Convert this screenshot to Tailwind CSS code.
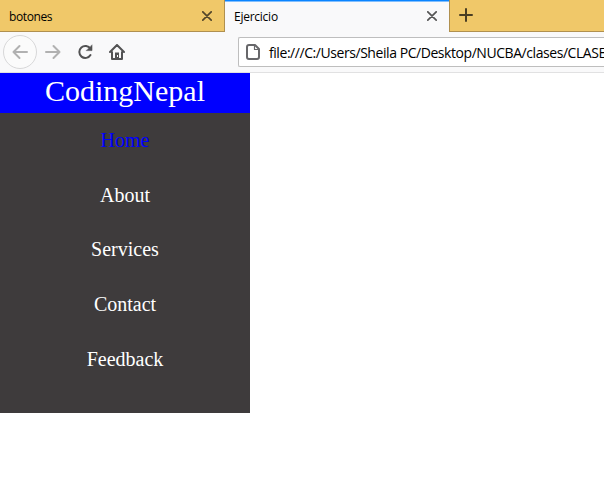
<!DOCTYPE html>
<html lang="es">
<head>
<meta charset="utf-8">
<title>Ejercicio</title>
<script src="https://cdn.jsdelivr.net/npm/@tailwindcss/browser@4"></script>
</head>
<body class="h-[491px] w-[604px] overflow-hidden bg-white font-['Open_Sans',sans-serif] text-black">
<header class="bg-[#f9f9fa]">
  <div class="flex h-8">
    <div class="flex h-8 w-[225px] items-center justify-between border-r border-b border-[#b0904f] bg-[#f0c869] pr-3 pl-[9px]">
      <span class="pt-[3px] text-[12px] leading-4 tracking-[-0.4px]">botones</span>
      <svg class="size-[10px]" viewBox="0 0 10 10" fill="none" stroke="#53462a" stroke-width="1.700" stroke-linecap="round"><path d="M.8 .8l8.400 8.400M9.200 .8L.8 9.200"/></svg>
    </div>
    <div class="flex h-8 w-[224px] items-center justify-between border-t border-[#0a84ff] pr-3 pl-[9px] shadow-[inset_0_0.500px_0_#0a84ff]">
      <span class="pt-px text-[12px] leading-4 tracking-[-0.25px]">Ejercicio</span>
      <svg class="mb-px size-[10px]" viewBox="0 0 10 10" fill="none" stroke="#555555" stroke-width="1.700" stroke-linecap="round"><path d="M.8 .8l8.400 8.400M9.200 .8L.8 9.200"/></svg>
    </div>
    <div class="flex h-8 flex-1 items-center border-b border-l border-[#b0904f] bg-[#f0c869] pl-[9px]">
      <svg class="mb-px size-[14px]" viewBox="0 0 14 14" fill="none" stroke="#4a3e23" stroke-width="2" stroke-linecap="round"><path d="M7 1v12M1 7h12"/></svg>
    </div>
  </div>
  <div class="flex h-[41px] items-center border-b border-[#e1e1e2] pl-[3px]">
    <div class="flex size-[34px] items-center justify-center rounded-full border border-[#d8d8d9] bg-[#fbfbfb]">
      <svg class="size-4" viewBox="0 0 16 16" fill="none" stroke="#b1b1b1" stroke-width="2" stroke-linecap="round" stroke-linejoin="round"><path d="M15 8H1.500M7.500 2L1.500 8l6 6"/></svg>
    </div>
    <svg class="ml-2 size-4" viewBox="0 0 16 16" fill="none" stroke="#b1b1b1" stroke-width="2" stroke-linecap="round" stroke-linejoin="round"><path d="M1 8h13.500M8.500 2l6 6-6 6"/></svg>
    <svg class="ml-4 size-4" viewBox="0 0 16 16" fill="none" stroke="#525253" stroke-width="2" stroke-linecap="round"><path d="M13.400 4.800A6 6 0 1 0 13.500 11"/><path d="M15 1.200v5.400H9.600z" fill="#525253" stroke="#525253" stroke-width=".6" stroke-linejoin="round"/></svg>
    <svg class="ml-4 size-4" viewBox="0 0 16 16" fill="none" stroke="#525253" stroke-width="2" stroke-linecap="round" stroke-linejoin="round"><path d="M1 8l7-7 7 7M3 8v7h10V8"/><path d="M6 15V8.500h4V15z" fill="#525253" stroke="none"/><path d="M8.500 11v2" stroke="#ffffff" stroke-width="1" stroke-linecap="butt"/></svg>
    <div class="ml-[113px] flex h-[30px] flex-1 items-center overflow-hidden rounded-l-[2px] border border-r-0 border-[#bebebe] bg-white pl-[7px]">
      <svg class="h-4 w-[14px] shrink-0" viewBox="0 0 14 16" fill="none" stroke="#67676a" stroke-width="2" stroke-linejoin="round"><path d="M3 1h6l4 4v8a2 2 0 0 1-2 2H3a2 2 0 0 1-2-2V3a2 2 0 0 1 2-2z"/><path d="M8.500 1v4.500H13" stroke-width="1.200"/></svg>
      <span class="ml-[9px] pt-0.5 text-[14px] leading-5 tracking-[-0.44px] whitespace-nowrap">file:///C:/Users/Sheila PC/Desktop/NUCBA/clases/CLASE</span>
    </div>
  </div>
</header>
<aside class="h-[340px] w-[250px] bg-[#3e3b3c] text-center font-['Liberation_Serif',serif] text-white">
  <h1 class="h-10 bg-[#0000ff] text-[30px] leading-[36px]">CodingNepal</h1>
  <nav class="flex flex-col text-[20px]">
    <a class="h-[54.700px] leading-[55px] text-[#0000ff]">Home</a>
    <a class="h-[54.700px] leading-[55px]">About</a>
    <a class="h-[54.700px] leading-[55px]">Services</a>
    <a class="h-[54.700px] leading-[55px]">Contact</a>
    <a class="h-[54.700px] leading-[55px]">Feedback</a>
  </nav>
</aside>
</body>
</html>
